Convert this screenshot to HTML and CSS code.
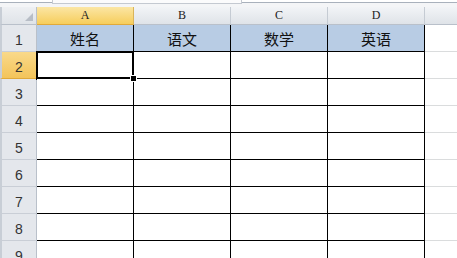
FILE: index.html
```html
<!DOCTYPE html>
<html lang="zh-CN">
<head>
    <meta charset="UTF-8">
    <title>Sheet1</title>
    <link rel="stylesheet" href="styles.css">
</head>
<body>
    <div class="topbar"><div class="formula-edge"></div></div>

    <div class="sheet">
        <!-- column headers -->
        <div class="corner"><span class="corner-mark"></span></div>
        <div class="col-head active">A</div>
        <div class="col-head">B</div>
        <div class="col-head">C</div>
        <div class="col-head">D</div>
        <div class="col-head last"></div>

        <!-- row 1: titles -->
        <div class="row-head">1</div>
        <div class="cell title">姓名</div>
        <div class="cell title">语文</div>
        <div class="cell title">数学</div>
        <div class="cell title">英语</div>
        <div class="cell empty"></div>

        <!-- row 2 -->
        <div class="row-head active">2</div>
        <div class="cell selected"><span class="handle"></span></div>
        <div class="cell"></div>
        <div class="cell"></div>
        <div class="cell"></div>
        <div class="cell empty"></div>

        <div class="row-head">3</div>
        <div class="cell"></div><div class="cell"></div><div class="cell"></div><div class="cell"></div><div class="cell empty"></div>

        <div class="row-head">4</div>
        <div class="cell"></div><div class="cell"></div><div class="cell"></div><div class="cell"></div><div class="cell empty"></div>

        <div class="row-head">5</div>
        <div class="cell"></div><div class="cell"></div><div class="cell"></div><div class="cell"></div><div class="cell empty"></div>

        <div class="row-head">6</div>
        <div class="cell"></div><div class="cell"></div><div class="cell"></div><div class="cell"></div><div class="cell empty"></div>

        <div class="row-head">7</div>
        <div class="cell"></div><div class="cell"></div><div class="cell"></div><div class="cell"></div><div class="cell empty"></div>

        <div class="row-head">8</div>
        <div class="cell"></div><div class="cell"></div><div class="cell"></div><div class="cell"></div><div class="cell empty"></div>

        <div class="row-head">9</div>
        <div class="cell"></div><div class="cell"></div><div class="cell"></div><div class="cell"></div><div class="cell empty"></div>
    </div>
</body>
</html>
```

FILE: styles.css
```css
body {
    margin: 0;
    padding: 0;
    background-color: white;
    overflow: hidden;
    font-family: "Liberation Sans", Arial, sans-serif;
}

.topbar {
    height: 7px;
    box-sizing: border-box;
    border-top: 2px solid white;
    background-color: #f4f5f7;
    position: relative;
}

.topbar::before {
    content: "";
    display: block;
    height: 1px;
    background-color: #a9b1bc;
}

.formula-edge {
    position: absolute;
    left: 52px;
    top: -2px;
    width: 188px;
    height: 3px;
    border: 1px solid #c4c9d1;
    border-top: none;
    background-color: #fbfbfc;
}

.sheet {
    display: grid;
    grid-template-columns: 37px 97px 97px 97px 97px 1fr;
    grid-template-rows: 18px 27px repeat(8, 27px);
}

.corner {
    position: relative;
    background: linear-gradient(#eef0f3, #dfe3e8);
    border-right: 1px solid #b9c0ca;
    border-bottom: 1px solid #b9c0ca;
    border-left: 2px solid #c8ced6;
}

.corner-mark {
    position: absolute;
    right: 3px;
    bottom: 3px;
    width: 0;
    height: 0;
    border-left: 8px solid transparent;
    border-bottom: 8px solid #b7bdc6;
}

.col-head {
    background: linear-gradient(#f2f4f7, #dfe3e8);
    border-right: 1px solid #c5cbd3;
    border-bottom: 1px solid #b9c0ca;
    font-family: "Liberation Serif", "DejaVu Serif", serif;
    font-size: 12px;
    color: #222;
    display: flex;
    align-items: center;
    justify-content: center;
}

.col-head.active {
    background: linear-gradient(#fbe6a4, #f6cd5c);
    border-right-color: #d9b45a;
    border-bottom-color: #e0a93a;
}

.col-head.last {
    border-right: none;
}

.row-head {
    background-color: #e4e7ec;
    border-left: 2px solid #c8ced6;
    border-right: 1px solid #b9c0ca;
    border-bottom: 1px solid #c9ced6;
    font-size: 14px;
    color: #333;
    display: flex;
    align-items: flex-end;
    justify-content: center;
    padding-bottom: 3px;
    box-sizing: border-box;
}

.row-head.active {
    background: linear-gradient(#f9d98a, #f3c45a);
    border-bottom-color: #e0a93a;
}

.cell {
    border-right: 1px solid #000;
    border-bottom: 1px solid #000;
    background-color: white;
    position: relative;
}

.cell.title {
    background-color: #b8cce4;
    font-family: "Noto Sans CJK SC", sans-serif;
    font-size: 15px;
    color: #111;
    display: flex;
    align-items: center;
    justify-content: center;
}

.cell.empty {
    border-right: none;
    border-bottom: 1px solid #dadcdd;
}

.cell.selected {
    box-shadow: inset 0 0 0 1px #000;
    outline: 2px solid #000;
    outline-offset: -1px;
}

.handle {
    position: absolute;
    right: -4px;
    bottom: -4px;
    width: 5px;
    height: 5px;
    background-color: #000;
    border: 1px solid white;
    z-index: 2;
}
```
